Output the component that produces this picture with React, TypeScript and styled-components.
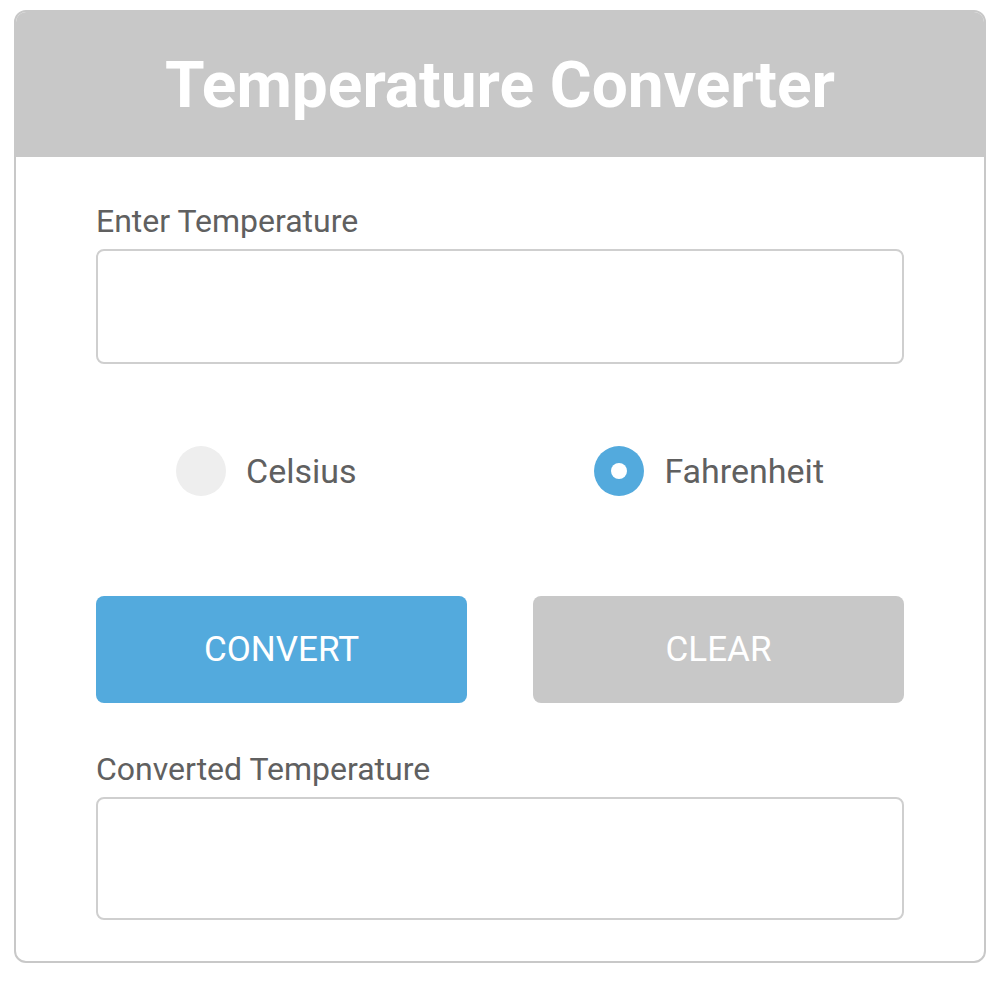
import React, { useState } from "react";
import styled, { createGlobalStyle } from "styled-components";

const Global = createGlobalStyle`
  html, body { margin: 0; padding: 0; background: #fff; }
  body { font-family: Roboto, "Noto Sans", sans-serif; }
  * { box-sizing: border-box; }
`;

const Page = styled.div`
  padding: 10px 14px;
`;

const Card = styled.div`
  width: 972px;
  height: 953px;
  border: 2px solid #c8c8c8;
  border-radius: 12px;
  overflow: hidden;
  display: flex;
  flex-direction: column;
`;

const Header = styled.div`
  background: #c8c8c8;
  height: 147px;
  margin: -2px -2px 0;
  padding-top: 5px;
  display: flex;
  align-items: center;
  justify-content: center;
`;

const Title = styled.h1`
  margin: 0;
  color: #fff;
  font-size: 64px;
  line-height: 76px;
  font-weight: 700;
`;

const Body = styled.div`
  padding: 45px 80px 0;
  display: flex;
  flex-direction: column;
`;

const Label = styled.label`
  color: #606060;
  font-size: 32px;
  line-height: 38px;
  margin-bottom: 9px;
`;

const Field = styled.input<{ $h: number }>`
  width: 100%;
  height: ${(p) => p.$h}px;
  border: 2px solid #cfcfcf;
  border-radius: 8px;
  outline: none;
  font-size: 28px;
  padding: 0 16px;
  font-family: inherit;
  color: #606060;
`;

const Row = styled.div`
  display: flex;
  gap: 66px;
`;

const RadioRow = styled.div`
  display: flex;
  justify-content: space-between;
  padding: 0 80px;
  margin: 82px 0 100px;
  height: 50px;
`;

const RadioOption = styled.label`
  display: flex;
  align-items: center;
  gap: 20px;
  color: #606060;
  font-size: 34px;
  cursor: pointer;
`;

const Dot = styled.span<{ $on: boolean }>`
  width: 50px;
  height: 50px;
  border-radius: 50%;
  background: ${(p) => (p.$on ? "#53aadd" : "#eeeeee")};
  display: flex;
  align-items: center;
  justify-content: center;
  &::after {
    content: "";
    width: 16px;
    height: 16px;
    border-radius: 50%;
    background: #fff;
    display: ${(p) => (p.$on ? "block" : "none")};
  }
`;

const Button = styled.button<{ $primary?: boolean }>`
  flex: 1;
  height: 107px;
  border: none;
  border-radius: 8px;
  background: ${(p) => (p.$primary ? "#53aadd" : "#c8c8c8")};
  color: #fff;
  font-family: inherit;
  font-size: 35px;
  cursor: pointer;
`;

const Spacer = styled.div`
  height: 47px;
`;

export default function App() {
  const [unit, setUnit] = useState<"c" | "f">("f");
  return (
    <Page>
      <Global />
      <Card>
        <Header>
          <Title>Temperature Converter</Title>
        </Header>
        <Body>
          <Label>Enter Temperature</Label>
          <Field $h={115} />
          <RadioRow>
            <RadioOption onClick={() => setUnit("c")}>
              <Dot $on={unit === "c"} />
              Celsius
            </RadioOption>
            <RadioOption onClick={() => setUnit("f")}>
              <Dot $on={unit === "f"} />
              Fahrenheit
            </RadioOption>
          </RadioRow>
          <Row>
            <Button $primary>CONVERT</Button>
            <Button>CLEAR</Button>
          </Row>
          <Spacer />
          <Label>Converted Temperature</Label>
          <Field $h={123} />
        </Body>
      </Card>
    </Page>
  );
}
